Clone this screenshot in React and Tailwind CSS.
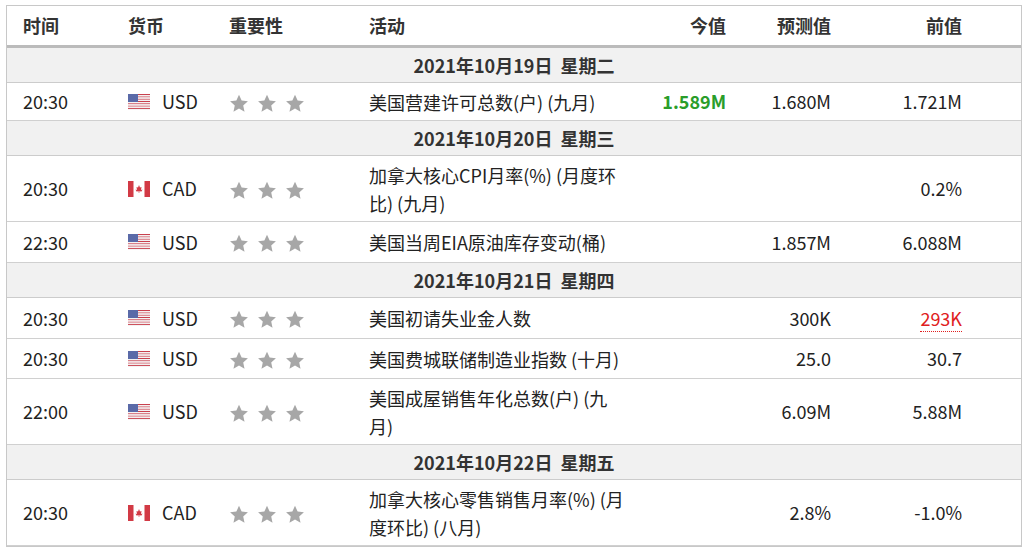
const US = () => (
  <svg width="22" height="16" viewBox="0 0 22 16" className="shrink-0">
    {[0,1,2,3,4,5,6].map(i => <rect key={i} x="0" y={i*2.3} width="22" height="1.15" fill="#c9404e" />)}
    {[0,1,2,3,4,5,6].map(i => <rect key={'w'+i} x="0" y={i*2.3+1.15} width="22" height="1.15" fill="#f3f3f3" />)}
    <rect x="0" y="0" width="10" height="8" fill="#5a6aa8" />
  </svg>
);
const CA = () => (
  <svg width="22" height="16" viewBox="0 0 22 16" className="shrink-0">
    <rect width="22" height="16" fill="#fff" />
    <rect width="5.5" height="16" fill="#d23a45" />
    <rect x="16.5" width="5.5" height="16" fill="#d23a45" />
    <path d="M11 4 L12 6.5 L13.5 6 L13 9 L14.5 8.5 L13.5 10.5 L11.3 10.3 L11.3 12 L10.7 12 L10.7 10.3 L8.5 10.5 L7.5 8.5 L9 9 L8.5 6 L10 6.5 Z" fill="#d23a45" />
  </svg>
);
const Star = () => (
  <svg width="20" height="19" viewBox="0 0 24 23"><path d="M12 1l3.2 7 7.6.8-5.7 5.1 1.6 7.5L12 17.6 5.3 21.4l1.6-7.5L1.2 8.8 8.8 8z" fill="#a7a7a7"/></svg>
);
const cols = "grid grid-cols-[104px_105px_140px_275px_95px_105px_131px_61px]";
const rows = [
  {d:"2021年10月19日  星期二"},
  {t:"20:30",c:"USD",f:"us",a:"美国营建许可总数(户) (九月)",n:"1.589M",nc:"green",p:"1.680M",v:"1.721M",h:38},
  {d:"2021年10月20日  星期三"},
  {t:"20:30",c:"CAD",f:"ca",a:"加拿大核心CPI月率(%) (月度环比) (九月)",n:"",p:"",v:"0.2%",h:66},
  {t:"22:30",c:"USD",f:"us",a:"美国当周EIA原油库存变动(桶)",n:"",p:"1.857M",v:"6.088M",h:41},
  {d:"2021年10月21日  星期四"},
  {t:"20:30",c:"USD",f:"us",a:"美国初请失业金人数",n:"",p:"300K",v:"293K",vc:"red",h:41},
  {t:"20:30",c:"USD",f:"us",a:"美国费城联储制造业指数 (十月)",n:"",p:"25.0",v:"30.7",h:40},
  {t:"22:00",c:"USD",f:"us",a:"美国成屋销售年化总数(户) (九月)",n:"",p:"6.09M",v:"5.88M",h:66},
  {d:"2021年10月22日  星期五"},
  {t:"20:30",c:"CAD",f:"ca",a:"加拿大核心零售销售月率(%) (月度环比) (八月)",n:"",p:"2.8%",v:"-1.0%",h:66},
];
export default function App() {
  return (
    <div className="w-[1028px] h-[555px] bg-white pt-[5px] pl-[6px] text-[18px] text-[#222] overflow-hidden" style={{fontFamily:'"Noto Sans CJK SC","Noto Sans",sans-serif'}}>
      <div className="w-[1016px] border border-[#c8c8c8]">
        <div className={cols + " h-[42px] items-center font-bold text-[#333] border-b-[3px] border-[#bbb]"}>
          <div className="pl-[16px]">时间</div><div className="pl-[17px]">货币</div><div className="pl-[13px]">重要性</div><div className="pl-[13px]">活动</div>
          <div className="text-right">今值</div><div className="text-right">预测值</div><div className="text-right">前值</div><div/>
        </div>
        {rows.map((r,i)=> r.d ? (
          <div key={i} className="h-[35px] bg-[#f1f1f1] border-b border-[#ccc] flex items-center justify-center font-bold text-[#333] whitespace-pre">{r.d}</div>
        ) : (
          <div key={i} className={cols + " items-center border-b border-[#d0d0d0]"} style={{height:r.h}}>
            <div className="pl-[16px]">{r.t}</div>
            <div className="pl-[17px] flex items-center gap-[12px]">{r.f==="us"?<US/>:<CA/>}<span>{r.c}</span></div>
            <div className="pl-[13px] flex gap-[8px] pt-[3px]"><Star/><Star/><Star/></div>
            <div className="pl-[13px] leading-[28px]">{r.a}</div>
            <div className={"text-right " + (r.nc==="green"?"text-[#2a9d2a] font-bold":"")}>{r.n}</div>
            <div className="text-right">{r.p}</div>
            <div className="text-right">{r.vc==="red"?<span className="text-[#e02020] border-b border-dotted border-[#e02020]">{r.v}</span>:r.v}</div>
            <div/>
          </div>
        ))}
      </div>
    </div>
  );
}
